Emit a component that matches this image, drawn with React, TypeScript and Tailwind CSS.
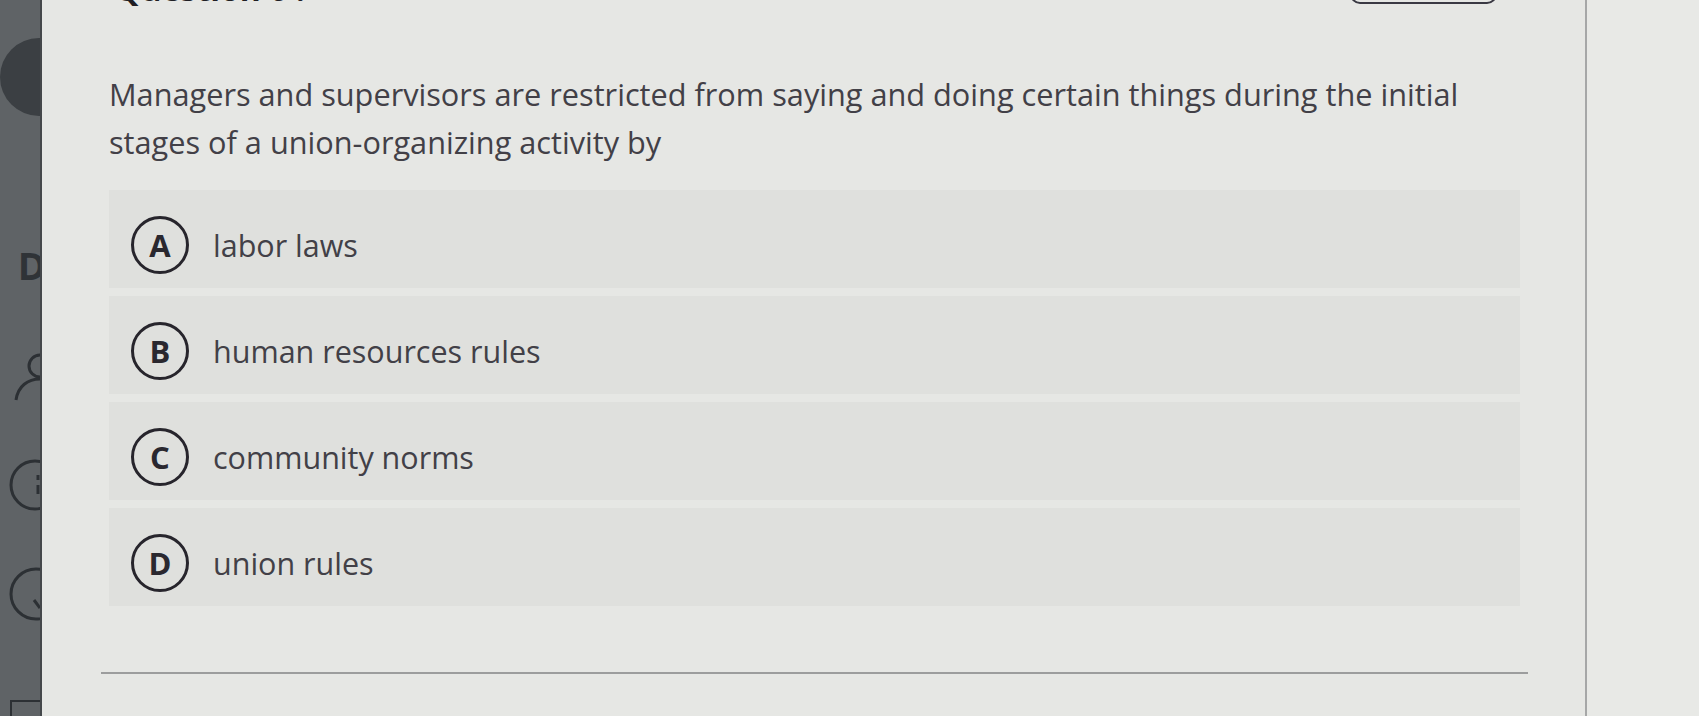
import React from 'react';

interface Choice {
    letter: string;
    label: string;
}

const choices: Choice[] = [
    {letter: 'A', label: 'labor laws'},
    {letter: 'B', label: 'human resources rules'},
    {letter: 'C', label: 'community norms'},
    {letter: 'D', label: 'union rules'},
];

const font = {fontFamily: '"Open Sans", "Noto Sans", sans-serif'};

const Sidebar: React.FC = () => {
    return (
        <aside className="w-[42px] shrink-0 overflow-hidden bg-[#5f6366] border-r-2 border-[#45484b] flex flex-col items-end">
            <div className="mt-[38px] -mr-[38px] size-[78px] shrink-0 rounded-full bg-[#3b3f43]"></div>
            <div className="mt-[130px] -mr-[6px] text-[38px] font-bold leading-none text-[#2f3337]" style={font}>D</div>
            <div className="mt-[22px] h-px w-[26px] bg-[#7a7e81]"></div>
            <svg className="mt-[46px] -mr-[14px] shrink-0" width="42" height="50" viewBox="0 0 42 50" fill="none" stroke="#2c3034" strokeWidth="3">
                <circle cx="28" cy="14" r="11"/>
                <path d="M4 48 C6 34 16 27 28 27"/>
            </svg>
            <svg className="mt-[56px] -mr-[22px] shrink-0" width="54" height="54" viewBox="0 0 54 54" fill="none" stroke="#2c3034" strokeWidth="3">
                <circle cx="27" cy="27" r="24"/>
                <path d="M30 17 v5 M30 27 v9"/>
            </svg>
            <svg className="mt-[54px] -mr-[24px] shrink-0" width="56" height="56" viewBox="0 0 56 56" fill="none" stroke="#2c3034" strokeWidth="3">
                <circle cx="28" cy="28" r="25"/>
                <path d="M26 34 l6 8"/>
            </svg>
            <div className="mt-[78px] -mr-[4px] h-[30px] w-[34px] shrink-0 border-2 border-[#2c3034]"></div>
        </aside>
    );
};

const ChoiceRow: React.FC<Choice> = ({letter, label}) => {
    return (
        <div className="h-[98px] w-[1411px] bg-[#dfe0dd] flex items-center pl-[22px] pt-[12px] gap-[24px]">
            <div className="size-[58px] shrink-0 rounded-full border-[3px] border-[#27252c] flex items-center justify-center">
                <span className="text-[31px] font-bold leading-none text-[#2a282f]" style={font}>{letter}</span>
            </div>
            <span className="text-[30.5px] leading-none text-[#424047]" style={font}>{label}</span>
        </div>
    );
};

const App: React.FC = () => {
    return (
        <div className="flex h-[716px] w-[1699px] overflow-hidden bg-[#e6e7e4]">
            <Sidebar/>
            <main className="w-[1545px] shrink-0 border-r-2 border-[#a6a7a7] flex flex-col pl-[67px] overflow-hidden">
                <div className="flex items-start justify-between pr-[88px]">
                    <h1 className="-mt-[29px] ml-[6px] text-[32px] font-bold leading-[36px] text-[#1f1e24]" style={font}>Question 6 :</h1>
                    <div className="-mt-[38px] h-[42px] w-[147px] rounded-[10px] border-2 border-[#3a3943]"></div>
                </div>
                <p className="mt-[63px] w-[1400px] text-[30.7px] leading-[48px] text-[#424047]" style={font}>
                    Managers and supervisors are restricted from saying and doing certain things during the initial stages of a union-organizing activity by
                </p>
                <div className="mt-[24px] flex flex-col gap-[8px]">
                    {choices.map((choice) => (
                        <ChoiceRow key={choice.letter} letter={choice.letter} label={choice.label}/>
                    ))}
                </div>
                <div className="mt-[66px] -ml-[8px] h-[2px] w-[1427px] bg-[#9c9d9d]"></div>
            </main>
            <div className="flex-1 bg-[#e8e9e6]"></div>
        </div>
    );
};

export default App;
